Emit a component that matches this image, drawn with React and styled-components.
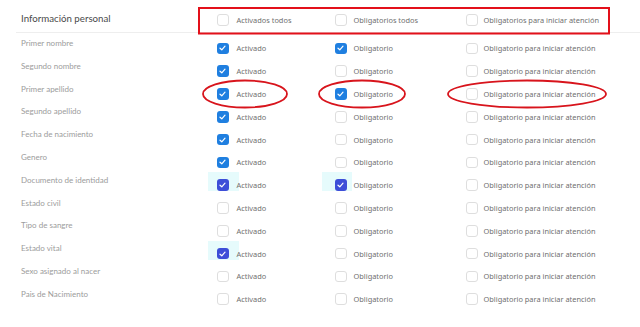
import React from "react";
import styled, { createGlobalStyle, css } from "styled-components";

const Global = createGlobalStyle`
  html, body { margin: 0; padding: 0; background: #fff; }
  body { font-family: "Noto Sans", sans-serif; }
`;

const Page = styled.div`
  position: relative;
  width: 640px;
  height: 327px;
  overflow: hidden;
  background: #fff;
`;

const Grid = styled.div`
  display: grid;
  grid-template-columns: 196px 118px 131px 1fr;
  align-items: center;
`;

const Header = styled(Grid)`
  height: 33px;
  margin-left: 16px;
  padding-left: 5px;
  padding-top: 8px;
  border-bottom: 1px solid #eeeeee;
  box-sizing: border-box;
`;

const Title = styled.div`
  font-family: "Lato", sans-serif;
  font-size: 9.7px;
  font-weight: 400;
  color: #4a4a4a;
  margin-top: -4px;
`;

const Body = styled.div`
  padding-top: 4px;
  padding-left: 21px;
`;

const Row = styled(Grid)`
  height: 22.8px;
`;

const FieldName = styled.div`
  align-self: start;
  font-family: "Lato", sans-serif;
  font-size: 8px;
  line-height: 12px;
  color: #9c9c9c;
`;

const Option = styled.label`
  position: relative;
  display: flex;
  align-items: center;
  gap: ${(p) => p.$gap}px;
  font-family: "Noto Sans", sans-serif;
  font-size: 7.4px;
  color: #6f6f6f;
  white-space: nowrap;
  ${(p) =>
    p.$highlight &&
    css`
      &::before {
        content: "";
        position: absolute;
        left: ${p.$hlLeft}px;
        top: -7px;
        width: ${p.$hlWidth}px;
        height: 19px;
        background: #e6fbfc;
        z-index: 0;
      }
    `}
  & > * { position: relative; z-index: 1; }
`;

const Box = styled.span`
  width: 11.5px;
  height: 11.5px;
  box-sizing: border-box;
  border-radius: 3px;
  flex: none;
  display: flex;
  align-items: center;
  justify-content: center;
  border: 1px solid ${(p) => (p.$checked ? "transparent" : "#dedede")};
  background: ${(p) =>
    p.$checked ? (p.$indigo ? "#3d4ed8" : "#1f7fe0") : "#fff"};
`;

const Annotations = styled.svg`
  position: absolute;
  left: 0;
  top: 0;
  pointer-events: none;
`;

function Check({ checked, indigo, label, gap, highlight, hlLeft = -9, hlWidth = 31 }) {
  return (
    <Option $gap={gap} $highlight={highlight} $hlLeft={hlLeft} $hlWidth={hlWidth}>
      <Box $checked={checked} $indigo={indigo}>
        {checked && (
          <svg width="7" height="6" viewBox="0 0 7 6">
            <path d="M1 3.2 L2.8 4.8 L6 1.2" fill="none" stroke="#fff" strokeWidth="1.2" strokeLinecap="round" strokeLinejoin="round" />
          </svg>
        )}
      </Box>
      <span>{label}</span>
    </Option>
  );
}

const rows = [
  ["Primer nombre", 1, 1],
  ["Segundo nombre", 1, 0],
  ["Primer apellido", 1, 1],
  ["Segundo apellido", 1, 0],
  ["Fecha de nacimiento", 1, 0],
  ["Genero", 1, 0],
  ["Documento de identidad", 2, 2],
  ["Estado civil", 0, 0],
  ["Tipo de sangre", 0, 0],
  ["Estado vital", 2, 0],
  ["Sexo asignado al nacer", 0, 0],
  ["Pais de Nacimiento", 0, 0],
];

export default function App() {
  return (
    <Page>
      <Global />
      <Header>
        <Title>Información personal</Title>
        <Check label="Activados todos" gap={8} />
        <Check label="Obligatorios todos" gap={7} />
        <Check label="Obligatorios para iniciar atención" gap={6} />
      </Header>
      <Body>
        {rows.map(([name, a, o]) => (
          <Row key={name}>
            <FieldName>{name}</FieldName>
            <Check label="Activado" gap={8} checked={a > 0} indigo={a === 2} highlight={a === 2} />
            <Check label="Obligatorio" gap={7} checked={o > 0} indigo={o === 2} highlight={o === 2} hlLeft={-13} hlWidth={30} />
            <Check label="Obligatorio para iniciar atención" gap={6} />
          </Row>
        ))}
      </Body>
      <Annotations width="640" height="327" viewBox="0 0 640 327">
        <rect x="199" y="8" width="410" height="25.5" fill="none" stroke="#e3101a" strokeWidth="2" />
        <ellipse cx="245" cy="94" rx="42" ry="13.5" fill="none" stroke="#d8141c" strokeWidth="1.8" />
        <ellipse cx="362" cy="94" rx="43" ry="13.5" fill="none" stroke="#d8141c" strokeWidth="1.8" />
        <ellipse cx="527" cy="94" rx="79" ry="13.5" fill="none" stroke="#d8141c" strokeWidth="1.8" />
      </Annotations>
    </Page>
  );
}
